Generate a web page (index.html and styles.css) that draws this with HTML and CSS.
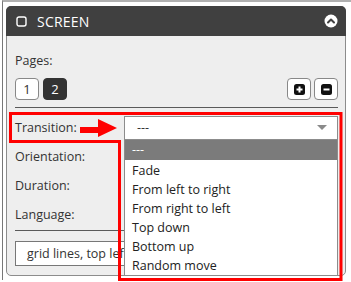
FILE: index.html
```html
<!DOCTYPE html>
<html>
<head>
<meta charset="utf-8">
<link rel="stylesheet" href="styles.css">
</head>
<body>
<div class="frame">
  <div class="panel">
    <div class="head">
      <svg class="chk" width="11" height="11" viewBox="0 0 11 11"><rect x="1" y="1" width="9" height="9" rx="2" fill="none" stroke="#fff" stroke-width="1.4"/></svg>
      <span class="title">SCREEN</span>
      <svg class="collapse" width="14" height="14" viewBox="0 0 14 14"><circle cx="7" cy="7" r="6.5" fill="#fff"/><path d="M4 8.5 L7 5.5 L10 8.5" fill="none" stroke="#404040" stroke-width="2" stroke-linecap="round" stroke-linejoin="round"/></svg>
    </div>
    <div class="body">
      <div class="lbl-pages">Pages:</div>
      <div class="pages">
        <div class="pbtn">1</div>
        <div class="pbtn on">2</div>
        <div class="spacer"></div>
        <div class="ibtn"><svg width="11" height="11" viewBox="0 0 11 11"><rect x="0" y="0" width="11" height="11" rx="2.5" fill="#111"/><path d="M5.5 2.5v6M2.5 5.5h6" stroke="#fff" stroke-width="2"/></svg></div>
        <div class="ibtn"><svg width="11" height="11" viewBox="0 0 11 11"><rect x="0" y="0" width="11" height="11" rx="2.5" fill="#111"/><path d="M2.5 5.5h6" stroke="#fff" stroke-width="2"/></svg></div>
      </div>
      <div class="sep"></div>
      <div class="rows">
        <div class="row">
          <span class="lbl">Transition:</span>
          <div class="selwrap">
            <div class="sel"><span>---</span><svg class="caret" width="10" height="6" viewBox="0 0 10 6"><path d="M0 0h10L5 5z" fill="#8a8a8a"/></svg></div>
            <ul class="menu">
              <li class="hl">---</li>
              <li>Fade</li>
              <li>From left to right</li>
              <li>From right to left</li>
              <li>Top down</li>
              <li>Bottom up</li>
              <li>Random move</li>
            </ul>
          </div>
        </div>
        <div class="row"><span class="lbl">Orientation:</span></div>
        <div class="row"><span class="lbl">Duration:</span></div>
        <div class="row"><span class="lbl">Language:</span></div>
      </div>
      <div class="sep sep2"></div>
      <div class="input">grid lines, top left</div>
    </div>
  </div>
</div>
<svg class="annot" width="351" height="282" viewBox="0 0 351 282">
  <polygon points="10.5,113.5 341,113.5 341,279.5 119.5,279.5 119.5,141.5 10.5,141.5" fill="none" stroke="#ff0000" stroke-width="3"/>
  <polygon points="80,127 98,127 98,119 117,128 98,137 98,133 80,133" fill="#ff0000"/>
</svg>
</body>
</html>
```
FILE: styles.css
```css
html, body { margin: 0; padding: 0; }
body {
  width: 351px; height: 282px; overflow: hidden; position: relative;
  background: #fff;
  font-family: "Open Sans", "Liberation Sans", sans-serif;
  color: #333;
}
.frame {
  margin-left: 2px;
  border-top: 2px solid #b0b0b0;
  border-left: 1px solid #777;
  padding: 4px 5px 0 3px;
  height: 280px;
  box-sizing: border-box;
}
.panel {
  width: 340px;
  height: 270px;
  box-sizing: border-box;
  border: 1px solid #8c8c8c;
  border-radius: 5px;
  background: #eeeeee;
}
.head {
  height: 30px;
  margin: -1px -1px 0 -1px;
  background: #404040;
  border-radius: 5px 5px 0 0;
  display: flex;
  align-items: center;
  padding: 0 8px 0 10px;
}
.chk { display: block; }
.title { color: #fff; font-size: 14px; margin-left: 10px; letter-spacing: 0.2px; }
.collapse { margin-left: auto; display: block; }
.body { padding: 0 7px 0 8px; position: relative; }
.lbl-pages { font-size: 12.5px; line-height: 18px; padding-top: 16px; margin-bottom: -1px; }
.pages { display: flex; gap: 4px; margin-top: 9px; align-items: center; }
.pbtn {
  width: 24px; height: 22px; box-sizing: border-box;
  border: 1px solid #888; border-radius: 4px; background: #fff;
  font-size: 13px; line-height: 20px; text-align: center; color: #333;
}
.pbtn.on { background: #333; border-color: #333; color: #fff; }
.spacer { flex: 1; }
.ibtn {
  width: 24px; height: 22px; box-sizing: border-box;
  border: 1px solid #888; border-radius: 4px; background: #fff;
  display: flex; align-items: center; justify-content: center;
  margin-left: -1px;
}
.ibtn svg { display: block; }
.sep { height: 1px; background: #5a5a5a; margin-top: 7px; }
.rows { margin-top: 5px; }
.row { height: 29px; display: flex; align-items: center; font-size: 12.5px; }
.lbl { width: 109px; flex: none; }
.selwrap { flex: 1; position: relative; }
.sel {
  height: 24px; box-sizing: border-box;
  border: 1px solid #8c8c8c; background: #fff;
  display: flex; align-items: center; padding: 0 10px 0 12px;
}
.caret { margin-left: auto; display: block; }
.menu {
  position: absolute; left: 0; right: 0; top: 24px;
  margin: 0; padding: 0; list-style: none;
  background: #fff; border: 1px solid #8c8c8c; border-top: none;
  z-index: 2;
}
.menu li { height: 19.2px; line-height: 21px; padding-left: 7px; font-size: 12.5px; color: #222; }
.menu li.hl { height: 20px; line-height: 20px; background: #7b7b7b; color: #fff; }
.sep2 { margin-top: 1px; }
.input {
  margin-top: 10px; height: 25px; box-sizing: border-box;
  border: 1px solid #777; background: #fff;
  font-size: 12.5px; line-height: 23px; padding-left: 11px; color: #333;
}
.annot { position: absolute; left: 0; top: 0; pointer-events: none; z-index: 5; }
```
